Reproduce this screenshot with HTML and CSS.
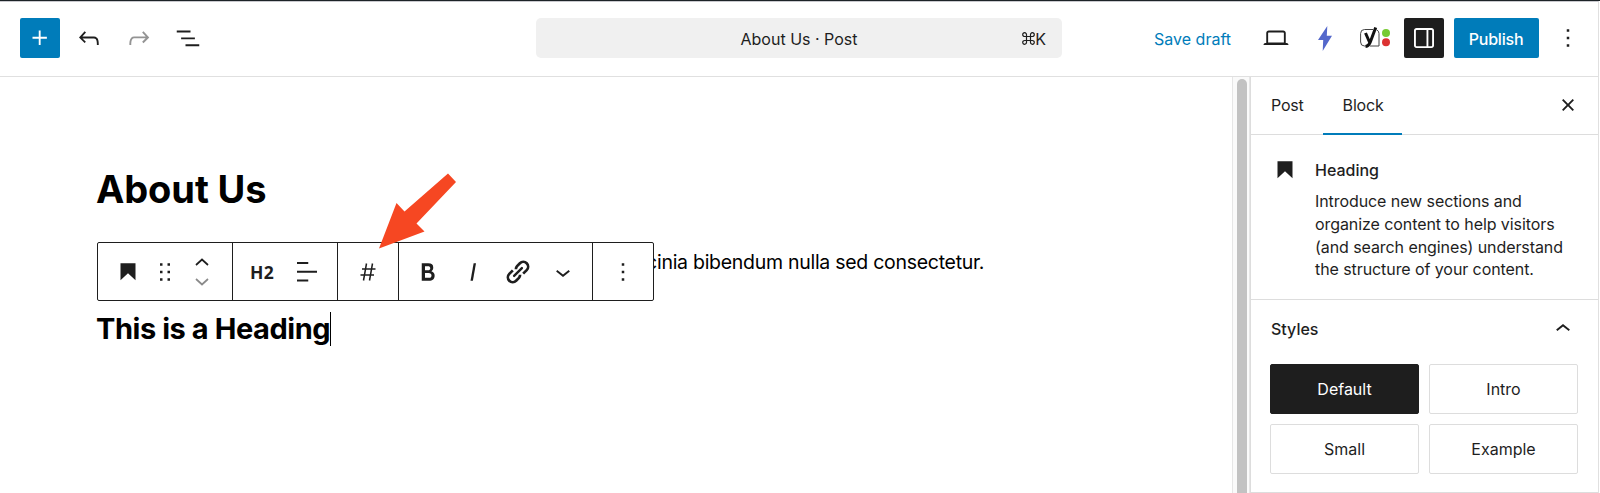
FILE: index.html
```html
<!DOCTYPE html>
<html lang="en">
<head>
<meta charset="utf-8">
<title>About Us · Post</title>
<link rel="stylesheet" href="styles.css">
</head>
<body>
<div class="editor">
  <header class="header">
    <div class="header-tools">
      <button class="btn btn-add"><svg class="icon" viewBox="0 0 24 24"><path d="M11 12.5V17.5H12.5V12.5H17.5V11H12.5V6H11V11H6V12.5H11Z"/></svg></button>
      <button class="btn"><svg class="icon" viewBox="0 0 24 24"><path d="M18.3 11.7c-.6-.6-1.4-.9-2.3-.9H6.7l2.9-3.3-1.1-1-4.5 5L8.5 16l1-1-2.7-2.7H16c.5 0 .9.2 1.3.5 1 1 1 3.4 1 4.5v.3h1.5v-.2c0-1.5 0-4.3-1.5-5.7z"/></svg></button>
      <button class="btn is-disabled"><svg class="icon" viewBox="0 0 24 24"><path d="M15.6 6.5l-1.1 1 2.9 3.3H8c-.9 0-1.7.3-2.3.9-1.4 1.5-1.4 4.2-1.4 5.6v.2h1.5v-.3c0-1.1 0-3.5 1-4.5.3-.3.7-.5 1.3-.5h9.2L14.5 15l1.1 1.1 4.6-4.6-4.6-5z"/></svg></button>
      <button class="btn"><svg class="icon" viewBox="0 0 24 24"><path d="M3 6h11v1.5H3V6Zm3.5 5.5h11V13h-11v-1.5ZM21 17H10v1.5h11V17Z"/></svg></button>
    </div>
    <div class="command-bar"><span class="command-title">About Us · Post</span><span class="command-key"><svg class="cmd" viewBox="0 0 13 13"><path d="M4.5 4.5V2.7A1.9 1.9 0 1 0 2.7 4.5H10.3A1.9 1.9 0 1 0 8.5 2.7V10.3A1.9 1.9 0 1 0 10.3 8.5H2.7A1.9 1.9 0 1 0 4.5 10.3Z"/></svg>K</span></div>
    <div class="header-settings">
      <a class="save">Save draft</a>
      <button class="btn"><svg class="icon" viewBox="0 0 24 24"><path d="M20.5 16h-.7V8c0-1.1-.9-2-2-2H6.2c-1.1 0-2 .9-2 2v8h-.7c-.8 0-1.5.7-1.5 1.5h20c0-.8-.7-1.5-1.5-1.5zM5.7 8c0-.3.2-.5.5-.5h11.6c.3 0 .5.2.5.5v7.6H5.7V8z"/></svg></button>
      <button class="btn btn-bolt"><svg class="bolt" viewBox="0 0 14 25"><path d="M9.3 0 0 14h5.2L4.7 25 14 9.7H8.8Z"/></svg></button>
      <button class="btn btn-yoast"><svg class="yoast" viewBox="0 0 32 24"><path class="yoast-frame" d="M14 3.500H5.500Q1.600 3.500 1.600 7.500v8.500Q1.600 20 5.500 20h1M11 20h9V7.500Q20 4.800 17.500 3.800"/><path class="yoast-y" d="M6.500 7l4.200 9.500M16.700 1.500 11.500 15.500Q10 20 6.500 20.500"/><circle class="dot-green" cx="27" cy="7" r="4"/><circle class="dot-red" cx="27" cy="16.300" r="4"/></svg></button>
      <button class="btn btn-dark"><svg class="icon" viewBox="0 0 24 24"><path d="M18 4H6c-1.100 0-2 .9-2 2v12c0 1.100.9 2 2 2h12c1.100 0 2-.9 2-2V6c0-1.100-.9-2-2-2zm-4 14.500H6c-.3 0-.5-.2-.5-.5V6c0-.3.2-.5.5-.5h8v13zm4.500-.5c0 .3-.2.500-.5.500h-2.500v-13H18c.3 0 .5.200.5.500v12z"/></svg></button>
      <button class="btn btn-publish">Publish</button>
      <button class="btn btn-more"><svg class="icon" viewBox="0 0 24 24"><path d="M13 19h-2v-2h2v2zm0-6h-2v-2h2v2zm0-6h-2V5h2v2z"/></svg></button>
    </div>
  </header>
  <div class="body">
    <main class="canvas">
      <h1 class="title">About Us</h1>
      <p class="para">lacinia bibendum nulla sed consectetur.</p>
      <h2 class="heading">This is a Heading<span class="caret"></span></h2>
      <div class="toolbar">
        <div class="group g-block">
          <svg class="icon i-mark" viewBox="0 0 24 24"><path d="M6 5V18.500911L12 13L18 18.500911V5H6Z"/></svg>
          <svg class="icon i-drag" viewBox="0 0 24 24"><path d="M8 7h2V5H8v2zm0 6h2v-2H8v2zm0 6h2v-2H8v2zm6-14v2h2V5h-2zm0 8h2v-2h-2v2zm0 6h2v-2h-2v2z"/></svg>
          <span class="movers"><svg class="mover" viewBox="0 0 14 8"><path d="M1 7 7 1.500 13 7"/></svg><svg class="mover is-disabled" viewBox="0 0 14 8"><path d="M1 1 7 6.500 13 1"/></svg></span>
        </div>
        <div class="group g-level"><span class="level">H2</span><svg class="icon" viewBox="0 0 24 24"><path d="M13 5.500H4V4h9v1.500Zm7 7H4V11h16v1.500Zm-7 7H4V18h9v1.500Z"/></svg></div>
        <div class="group g-anchor"><svg class="hash" viewBox="0 0 16 18"><path d="M6.500.5 3.500 17.500M12.500.5 9.500 17.500M2 6H15.500M.5 12H14"/></svg></div>
        <div class="group g-format">
          <svg class="icon" viewBox="0 0 24 24"><path d="M14.700 11.300c1-.6 1.500-1.600 1.500-3 0-2.300-1.300-3.400-4-3.400H7v14h5.800c1.400 0 2.500-.3 3.300-1 .8-.7 1.200-1.700 1.200-2.900.1-1.900-.8-3.100-2.600-3.700zm-5.100-4h2.300c.6 0 1.100.1 1.400.4.300.3.5.7.5 1.200s-.2 1-.5 1.200c-.3.300-.8.400-1.400.4H9.600V7.300zm4.600 9c-.4.300-1 .4-1.700.4H9.600v-3.900h2.900c.7 0 1.300.2 1.700.5.400.3.6.8.6 1.500s-.2 1.200-.6 1.500z"/></svg>
          <svg class="icon" viewBox="0 0 24 24"><path d="M12.500 5L10 19h1.900l2.500-14z"/></svg>
          <svg class="icon link" viewBox="0 0 30 30"><g transform="rotate(-45 15 15)"><path d="M12.500 10.200H7.500a4.800 4.800 0 0 0 0 9.600H11.500a4.800 4.800 0 0 0 3-1.300M17.500 19.800h5a4.800 4.800 0 0 0 0-9.600H18.500a4.800 4.800 0 0 0-3 1.300"/><path class="link-bar" d="M9.500 15h11"/></g></svg>
          <svg class="icon" viewBox="0 0 24 24"><path d="M17.500 11.600L12 16l-5.500-4.400.9-1.200L12 14l4.500-3.600 1 1.200z"/></svg>
        </div>
        <div class="group g-more"><svg class="icon" viewBox="0 0 24 24"><path d="M13 19h-2v-2h2v2zm0-6h-2v-2h2v2zm0-6h-2V5h2v2z"/></svg></div>
      </div>
      <svg class="arrow" viewBox="0 0 78 76"><path d="M0 75.500 17.500 30 25.500 38.500 69 .5 77 9 37.500 50.500 45.500 58.500Z"/></svg>
    </main>
    <div class="scrollbar"><div class="thumb"></div></div>
    <aside class="sidebar">
      <div class="tabs"><span class="tab">Post</span><span class="tab is-active">Block</span><svg class="icon close" viewBox="0 0 24 24"><path d="M12 13.060l3.712 3.713 1.061-1.060L13.061 12l3.712-3.712-1.060-1.060L12 10.938 8.288 7.227l-1.061 1.060L10.939 12l-3.712 3.712 1.060 1.061L12 13.061z"/></svg></div>
      <section class="card">
        <svg class="icon" viewBox="0 0 24 24"><path d="M6 5V18.500911L12 13L18 18.500911V5H6Z"/></svg>
        <div class="card-text"><h3 class="card-title">Heading</h3><p class="card-desc">Introduce new sections and<br>organize content to help visitors<br>(and search engines) understand<br>the structure of your content.</p></div>
      </section>
      <section class="styles">
        <div class="styles-head"><span class="styles-title">Styles</span><svg class="icon" viewBox="0 0 24 24"><path d="M6.500 12.400L12 8l5.500 4.400-.9 1.200L12 10l-4.500 3.600-1-1.200z"/></svg></div>
        <div class="styles-grid"><span class="style is-active">Default</span><span class="style">Intro</span><span class="style">Small</span><span class="style">Example</span></div>
      </section>
    </aside>
  </div>
</div>
</body>
</html>
```
FILE: styles.css
```css
* { box-sizing: border-box; }
body { margin: 0; background: #fff; color: #1e1e1e; font-family: Inter, "Liberation Sans", sans-serif; font-size: 16px; }
h1, h2, h3, p { margin: 0; }
.editor { display: flex; flex-direction: column; width: 1600px; height: 493px; overflow: hidden; border-top: 1px solid #1d2327; }
.icon { display: block; flex: none; width: 30px; height: 30px; fill: currentColor; }
.btn { display: flex; align-items: center; justify-content: center; flex: none; width: 40px; height: 40px; padding: 0; border: 0; border-radius: 2px; background: none; color: #1e1e1e; font: inherit; }
.is-disabled { color: #8a8a8a; }
.btn.is-disabled { color: #949494; }
.btn-add { background: #007cba; color: #fff; }
.header { display: flex; align-items: center; flex: none; width: 1599px; height: 76px; padding: 0 10px 2px 20px; border-top: 1px solid #c9c9ce; border-bottom: 1px solid #e0e0e0; border-right: 1px solid #e0e0e0; }
.header-tools { display: flex; gap: 9.3px; flex: none; width: 516px; }
.command-bar { display: flex; align-items: center; justify-content: center; position: relative; flex: none; width: 526px; height: 40px; padding-top: 1px; border-radius: 5px; background: #f0f0f0; }
.command-title { letter-spacing: 0; }
.command-key { position: absolute; right: 16px; display: flex; align-items: center; }
.cmd { width: 13px; height: 13px; fill: none; stroke: currentColor; stroke-width: 1.2; }
.header-settings { display: flex; align-items: center; justify-content: flex-end; gap: 9.5px; flex: 1; }
.save { margin-right: 15px; padding-top: 1px; color: #007cba; }
.bolt { width: 14px; height: 25px; fill: #5468cb; }
.yoast { width: 32px; height: 24px; fill: none; }
.yoast-frame { stroke: #444; stroke-width: 1; }
.yoast-y { stroke: #111; stroke-width: 3; }
.dot-green { fill: #77ca32; }
.dot-red { fill: #dc3232; }
.btn-dark { background: #1e1e1e; color: #fff; }
.btn-publish { width: 85px; padding-top: 1px; background: #007cba; color: #fff; font-weight: 500; letter-spacing: -0.2px; }
.body { display: flex; flex: 1; min-height: 0; width: 1599px; border-right: 1px solid #e0e0e0; }
.canvas { position: relative; flex: 1; padding-left: 96px; color: #000; }
.title { padding-top: 87px; font-size: 38px; line-height: 50px; font-weight: 700; letter-spacing: -0.1px; }
.para { padding: 33px 0 0 535px; font-size: 19.5px; line-height: 30px; letter-spacing: -0.28px; white-space: nowrap; }
.heading { display: flex; align-items: center; margin-top: 34px; font-size: 29px; line-height: 36px; font-weight: 700; letter-spacing: -0.44px; }
.caret { width: 1px; height: 34px; background: #000; }
.toolbar { position: absolute; left: 97px; top: 165px; display: flex; width: 557px; height: 59px; border: 1px solid #1e1e1e; border-radius: 2px; background: #fff; color: #1e1e1e; }
.group { display: flex; align-items: center; border-right: 1px solid #1e1e1e; }
.group:last-child { border-right: 0; }
.g-block { width: 135px; padding-left: 15px; }
.i-drag { margin-left: 7px; }
.movers { display: flex; flex-direction: column; gap: 12px; margin-left: 15px; }
.mover { display: block; width: 14px; height: 8px; fill: none; stroke: currentColor; stroke-width: 1.7; }
.g-level { width: 105px; gap: 18px; padding-left: 17px; }
.level { font-family: "Noto Sans", sans-serif; font-size: 17.5px; font-weight: 700; letter-spacing: 0.3px; }
.g-anchor { width: 61px; justify-content: center; }
.hash { width: 16px; height: 18px; fill: none; stroke: currentColor; stroke-width: 1.5; }
.g-format { width: 194px; gap: 15px; padding-left: 14px; }
.link { fill: none; stroke: currentColor; stroke-width: 2.7; }
.link-bar { stroke-width: 2.4; stroke-linecap: round; }
.g-more { flex: 1; justify-content: center; }
.arrow { position: absolute; left: 379px; top: 96px; width: 78px; height: 76px; fill: #f64722; }
.scrollbar { display: flex; justify-content: center; width: 18px; padding: 2px 0 0 1px; border-left: 1px solid #e6e6e6; border-right: 1px solid #e6e6e6; background: #fafafa; }
.thumb { width: 10px; height: 500px; border-radius: 5px; background: #c2c2c2; }
.sidebar { width: 348px; border-left: 1px solid #ddd; }
.tabs { display: flex; align-items: center; height: 58px; border-bottom: 1px solid #ddd; padding-right: 15px; }
.tab { display: flex; align-items: center; height: 58px; padding: 0 19px 2px 20px; letter-spacing: -0.2px; }
.tab.is-active { border-bottom: 2px solid #007cba; padding-bottom: 0; }
.close { margin: 0 0 1px auto; }
.card { display: flex; gap: 15px; height: 165px; padding: 20px 0 0 19px; border-bottom: 1px solid #ddd; }
.card-title { font-size: 16px; line-height: 30px; font-weight: 500; }
.card-desc { line-height: 22.8px; padding-top: 5px; letter-spacing: -0.08px; white-space: nowrap; }
.styles { height: 193px; padding: 14px 20px 0 19px; border-bottom: 1px solid #ddd; }
.styles-head { display: flex; align-items: center; justify-content: space-between; height: 30px; }
.styles-title { padding-left: 1px; font-weight: 500; }
.styles-grid { display: grid; grid-template-columns: 149px 149px; grid-auto-rows: 50px; gap: 10px; padding-top: 20px; }
.style { display: flex; align-items: center; justify-content: center; border: 1px solid #ddd; border-radius: 2px; }
.style.is-active { border-color: #1e1e1e; background: #1e1e1e; color: #fff; }
```
